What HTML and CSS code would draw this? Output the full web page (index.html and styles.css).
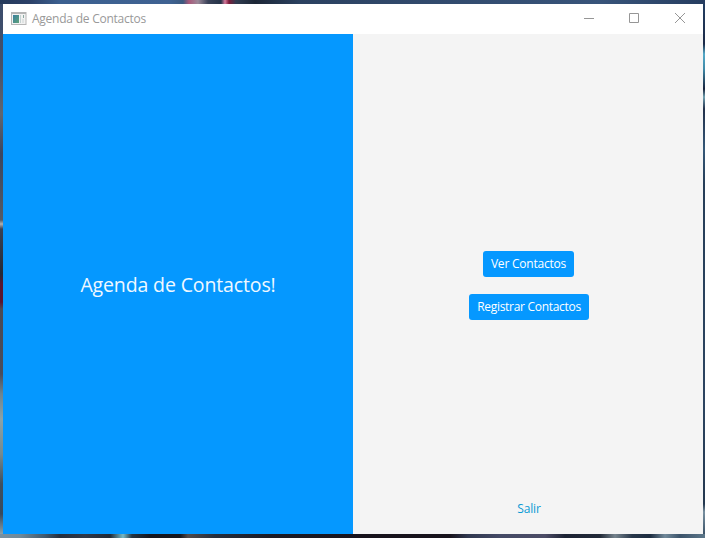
FILE: index.html
```html
<!DOCTYPE html>
<html lang="es">
<head>
<meta charset="utf-8">
<title>Agenda de Contactos</title>
<link rel="stylesheet" href="styles.css">
</head>
<body>
<div class="desktop">
  <div class="edge edge-top"></div>
  <div class="edge edge-left"></div>
  <main class="window">
    <header class="titlebar">
      <svg class="app-icon" width="16" height="14" viewBox="0 0 16 14">
        <defs><linearGradient id="pane" x2="1" y2="1"><stop offset="0" stop-color="#397f9f"/><stop offset="1" stop-color="#5ea27a"/></linearGradient></defs>
        <path fill="#b5b5b5" d="M0 0h15.500v13H0z"/>
        <path fill="#f2f2f2" d="M1 2h13.500v10H1z"/>
        <path fill="url(#pane)" d="M2 3h6v8H2z"/>
        <path fill="#c5d2d2" d="M9 3h1v8H9z"/>
        <path fill="#8ba9a2" d="M12 3h1v3h-1z"/>
        <path fill="#dfe3e3" d="M11 7h2v4h-2z"/>
      </svg>
      <span class="caption">Agenda de Contactos</span>
      <div class="controls">
        <svg width="46" height="30" viewBox="0 0 46 30"><path d="M18 14.500h10"/></svg>
        <svg width="45" height="30" viewBox="0 0 45 30"><path d="M17.500 9.500h9v9h-9z"/></svg>
        <svg width="46" height="30" viewBox="0 0 46 30"><path d="M18 9l10 10M28 9L18 19"/></svg>
      </div>
    </header>
    <div class="content">
      <section class="hero"><h1>Agenda de Contactos!</h1></section>
      <section class="menu">
        <button class="btn btn-view"><span>Ver Contactos</span></button>
        <button class="btn btn-register"><span>Registrar Contactos</span></button>
        <a class="exit">Salir</a>
      </section>
    </div>
  </main>
  <div class="edge edge-right"></div>
  <div class="edge edge-bottom"></div>
</div>
</body>
</html>
```
FILE: styles.css
```css
* { box-sizing: border-box; }
body {
  margin: 0;
  overflow: hidden;
  font-family: "Open Sans", "Noto Sans", sans-serif;
}
.desktop {
  display: grid;
  grid-template-columns: 3px 700px 2px;
  grid-template-rows: 4px 530px 4px;
  width: 705px;
  height: 538px;
}
.edge-top {
  grid-column: 1 / -1;
  background: linear-gradient(90deg, #253a5c 0, #2c4168 30px, #3c6090 60px, #3f6292 170px, #3b597f 183px, #a8587a 189px, #9a8898 198px, #3a4258 208px, #253348 221px, #d67a9c 225px, #7a1a38 229px, #303c50 236px, #1c2636 255px, #2b4160 300px, #30486a 400px, #38547a 600px, #263d60 705px);
}
.edge-left {
  background: linear-gradient(180deg, #3a4c6c 0, #45506a 60px, #606670 110px, #3c4660 150px, #555b66 216px, #b0b0b0 220px, #3a4254 225px, #252a38 270px, #5a1530 280px, #5a1530 298px, #4c4a54 305px, #4a4d5c 370px, #6c8490 390px, #8ba2a8 415px, #748a90 450px, #3f5060 480px, #384a5e 510px, #8aa0aa 530px);
}
.edge-right {
  background: linear-gradient(180deg, #233f62 0, #1c2a48 40px, #54a9c8 50px, #408aa8 65px, #17233c 85px, #70a0b0 93px, #22304a 105px, #355878 145px, #263e58 180px, #2c4460 400px, #24384f 500px, #7890a0 508px, #3c5368 530px);
}
.edge-bottom {
  grid-column: 1 / -1;
  background: linear-gradient(90deg, #7890a0 0, #6f8a9b 20px, #40596e 45px, #252e3e 60px, #303848 85px, #202936 110px, #76b8c4 123px, #253442 132px, #15151e 150px, #15151d 180px, #50494a 188px, #262e3d 215px, #1c1a24 270px, #18131c 360px, #18131c 450px, #30384f 468px, #444a66 500px, #4c4c66 545px, #1d2334 565px, #222a38 600px, #75838d 615px, #28374a 632px, #1c2c40 650px, #71899a 665px, #3b536a 680px, #5d778a 705px);
}
.window { display: flex; flex-direction: column; background: #fff; }
.titlebar {
  display: flex;
  align-items: center;
  height: 30px;
  padding-left: 8px;
}
.app-icon { margin-top: -1px; }
.caption {
  margin-left: 5px;
  font-size: 12px;
  line-height: 16px;
  letter-spacing: -0.24px;
  color: #999;
}
.controls { display: flex; margin-left: auto; }
.controls path { fill: none; stroke: #969696; stroke-width: 1; }
.content { display: grid; grid-template-columns: 350px 350px; height: 500px; }
.hero {
  display: flex;
  align-items: center;
  justify-content: center;
  padding-top: 2px;
  background: #0598ff;
}
.hero h1 {
  margin: 0;
  font-size: 19.5px;
  font-weight: 400;
  line-height: 28px;
  letter-spacing: -0.13px;
  color: #f0f8ff;
}
.menu {
  display: flex;
  flex-direction: column;
  align-items: center;
  padding-top: 217px;
  padding-left: 2px;
  background: #f4f4f4;
}
.btn {
  display: flex;
  align-items: center;
  justify-content: center;
  height: 26px;
  padding: 0;
  border: 0;
  border-radius: 3px;
  background: #0598ff;
  color: #fff;
  font: 12px/16px "Open Sans", "Noto Sans", sans-serif;
  white-space: nowrap;
}
.btn-view { width: 91px; margin: 0 1px 17px 0; letter-spacing: -0.22px; }
.btn-register { width: 120px; letter-spacing: -0.3px; }
.exit {
  margin-top: auto;
  margin-bottom: 17px;
  font-size: 12px;
  line-height: 16px;
  letter-spacing: -0.15px;
  color: #0b9ad4;
}
```
